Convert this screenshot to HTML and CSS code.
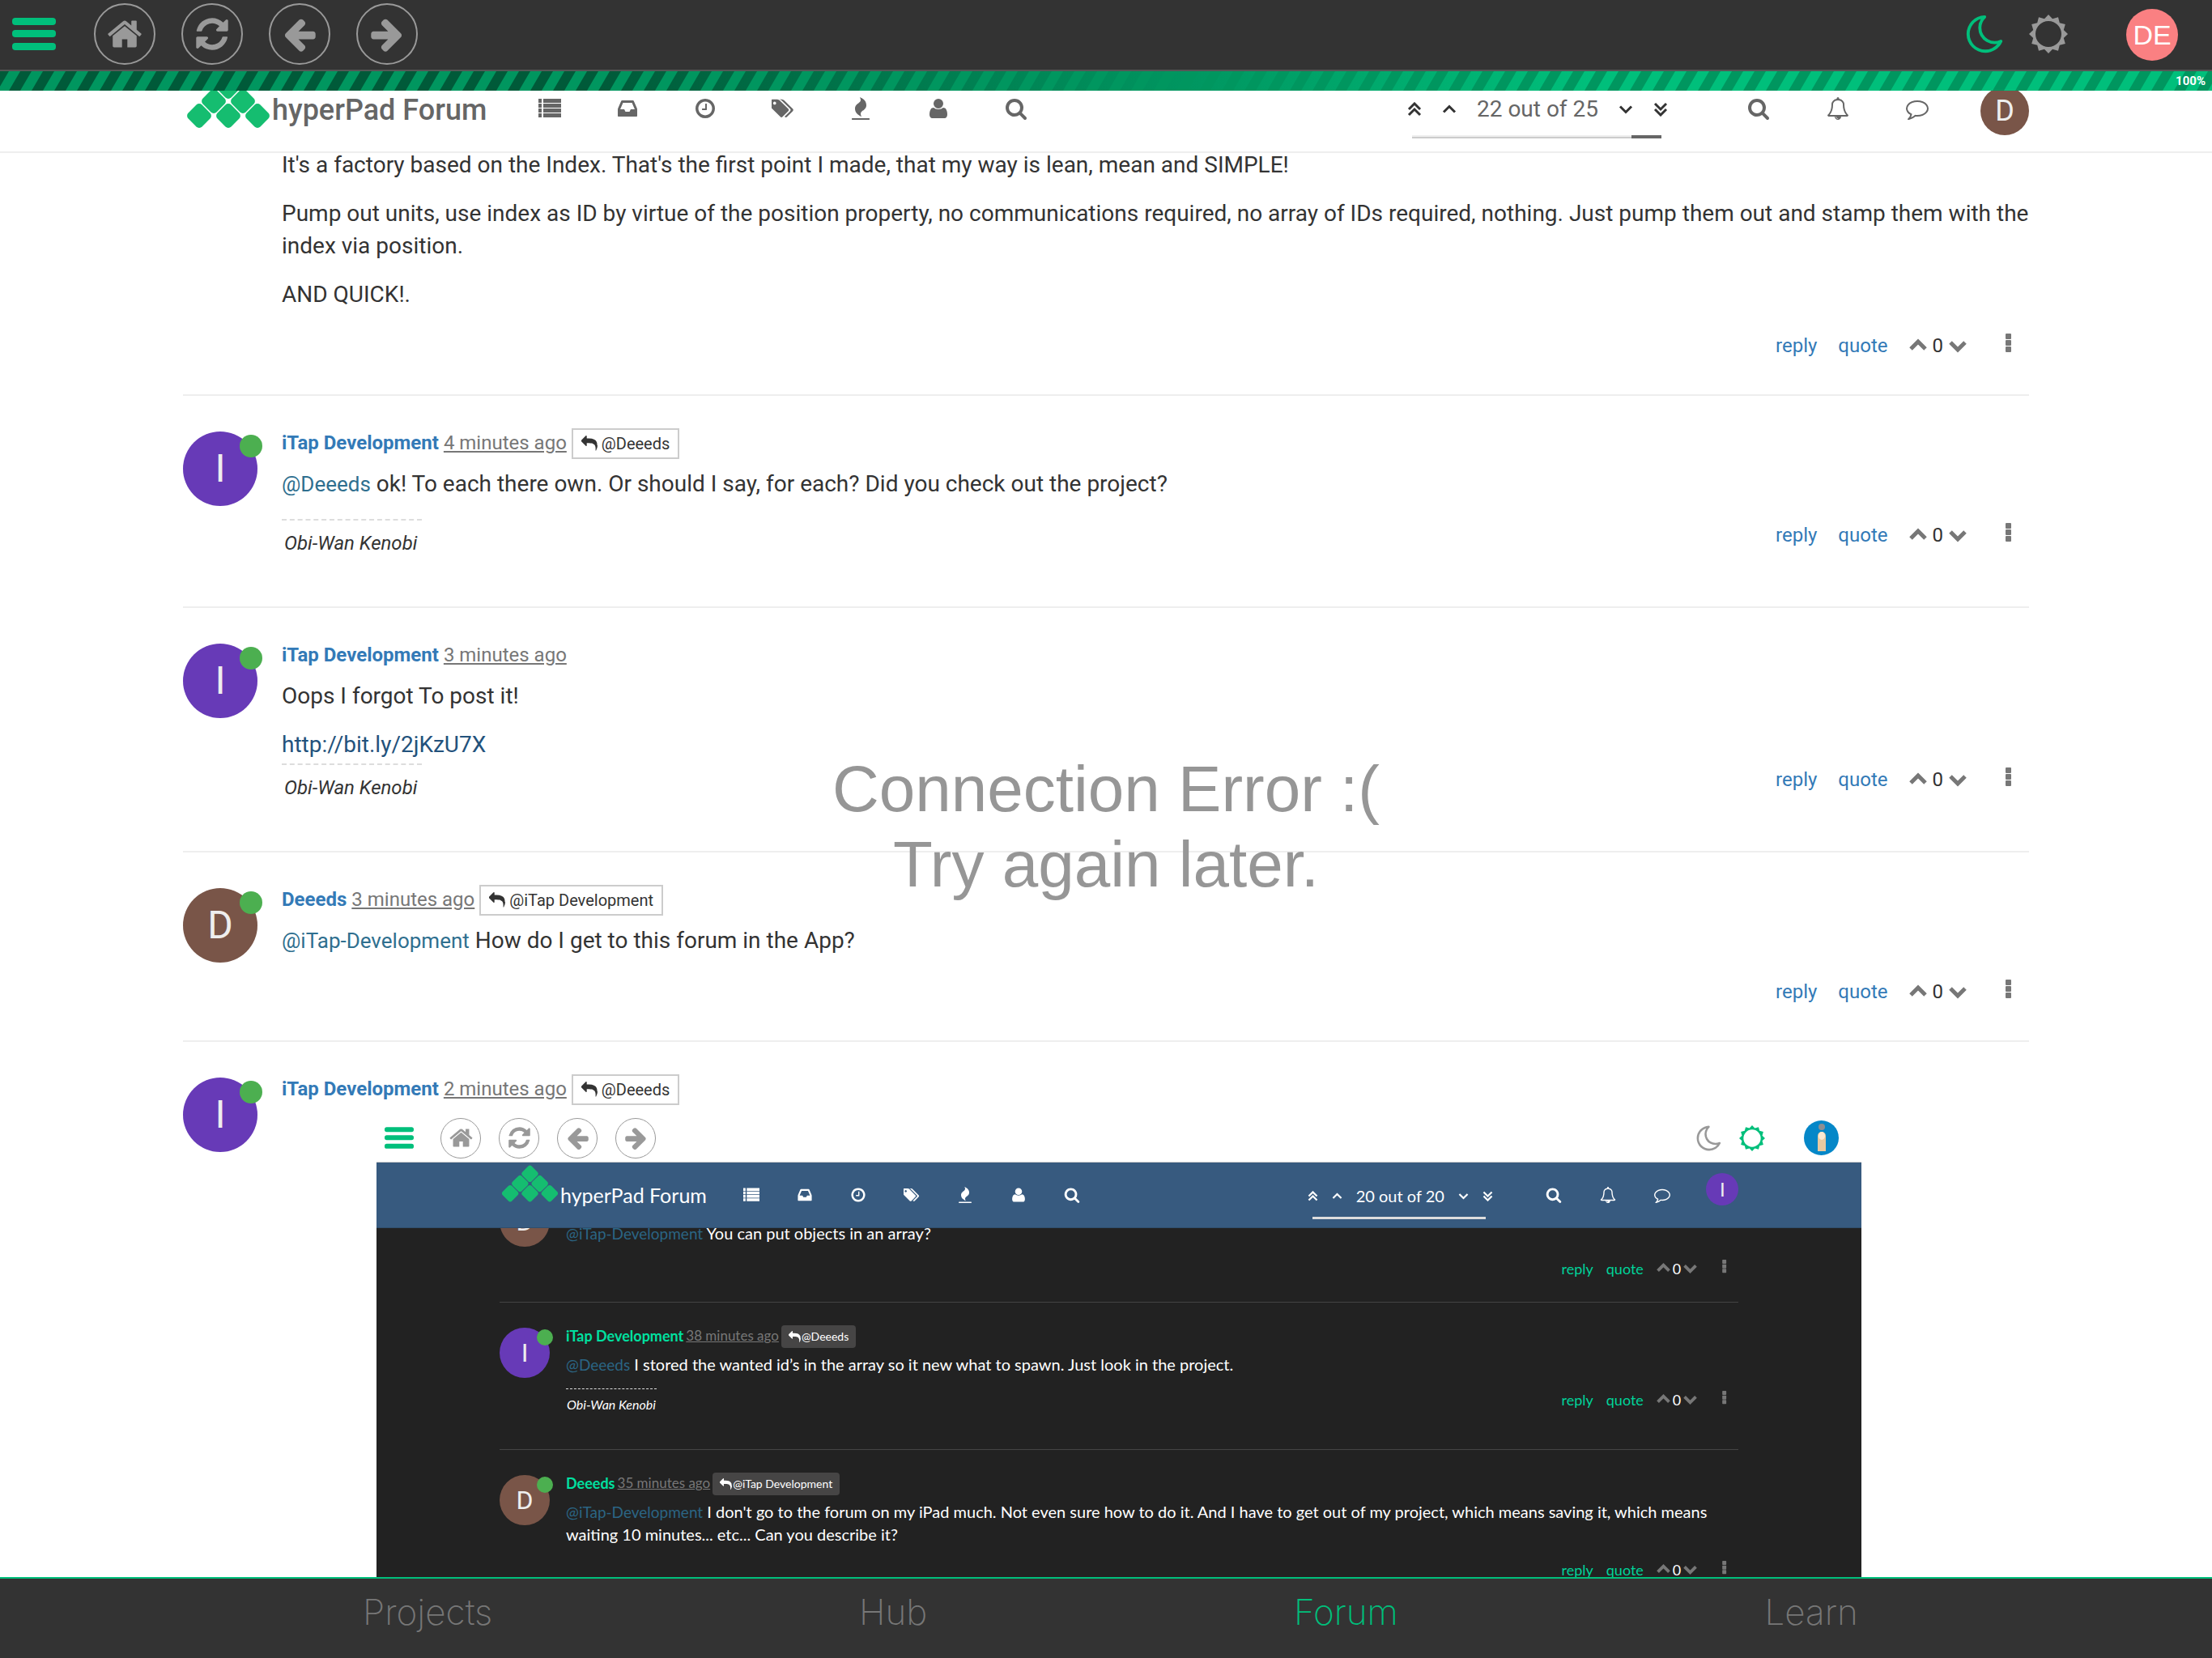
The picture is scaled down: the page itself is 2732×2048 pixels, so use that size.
FILE: index.html
```html
<!DOCTYPE html>
<html lang="en">
<head>
<meta charset="utf-8">
<meta name="viewport" content="width=device-width, initial-scale=1">
<title>hyperPad Forum</title>
<link rel="stylesheet" href="styles.css">
</head>
<body>
<svg class="sprite" aria-hidden="true">
  <symbol id="i-home" viewBox="0 0 1792 1792"><path d="M1472 992v480q0 26-19 45t-45 19h-384v-384h-256v384h-384q-26 0-45-19t-19-45v-480q0-1 .5-3t.5-3l575-474 575 474q1 2 1 6zm223-69l-62 74q-8 9-21 11h-3q-13 0-21-7l-692-577-692 577q-12 8-24 7-13-2-21-11l-62-74q-8-10-7-23.5t11-21.5l719-599q32-26 76-26t76 26l244 204v-195q0-14 9-23t23-9h192q14 0 23 9t9 23v408l219 182q10 8 11 21.5t-7 23.5z"/></symbol>
  <symbol id="i-refresh" viewBox="0 0 1792 1792"><path d="M1639 1056q0 5-1 7-64 268-268 434.5t-478 166.5q-146 0-282.5-55t-243.5-157l-129 129q-19 19-45 19t-45-19-19-45v-448q0-26 19-45t45-19h448q26 0 45 19t19 45-19 45l-137 137q71 66 161 102t187 36q134 0 250-65t186-179q11-17 53-117 8-23 30-23h192q13 0 22.5 9.5t9.5 22.5zm25-800v448q0 26-19 45t-45 19h-448q-26 0-45-19t-19-45 19-45l138-138q-148-137-349-137-134 0-250 65t-186 179q-11 17-53 117-8 23-30 23h-199q-13 0-22.5-9.5t-9.5-22.5v-7q65-268 270-434.5t480-166.5q146 0 284 55.5t245 156.5l130-129q19-19 45-19t45 19 19 45z"/></symbol>
  <symbol id="i-left" viewBox="0 0 1792 1792"><path d="M1664 896v128q0 53-32.5 90.5t-84.5 37.5h-704l293 294q38 36 38 90t-38 90l-75 76q-37 37-90 37-52 0-91-37l-651-652q-37-37-37-90 0-52 37-91l651-650q38-38 91-38 52 0 90 38l75 74q38 38 38 91t-38 91l-293 293h704q52 0 84.5 37.5t32.5 90.5z"/></symbol>
  <symbol id="i-right" viewBox="0 0 1792 1792"><path d="M1600 960q0 54-37 91l-651 651q-39 37-91 37-51 0-90-37l-75-75q-38-38-38-91t38-91l293-293h-704q-52 0-84.5-37.5t-32.5-90.5v-128q0-53 32.5-90.5t84.5-37.5h704l-293-294q-38-36-38-90t38-90l75-75q38-38 90-38 53 0 91 38l651 651q37 35 37 90z"/></symbol>
  <symbol id="i-moon" viewBox="0 0 1792 1792"><path d="M1390 1303q-54 9-110 9-182 0-337-90t-245-245-90-337q0-192 104-357-201 60-328.5 229t-127.5 384q0 130 51 248.5t136.5 204 204 136.5 248.5 51q144 0 273.5-61.5t220.5-171.5zm203-85q-94 203-283.5 324.5t-413.5 121.5q-156 0-298-61t-245-164-164-245-61-298q0-153 57.5-292.5t156-241.5 235.5-164.5 290-68.5q44-2 61 39 18 41-15 72-86 78-131.5 181.5t-45.5 218.5q0 148 73 273t198 198 273 73q118 0 228-51 41-18 72 13 14 14 17.5 34t-4.5 38z"/></symbol>
  <symbol id="i-sun" viewBox="0 0 48 48"><path fill-rule="evenodd" d="M24 0L29 5.2 36 3.2 37.8 10.2 44.8 12 42.8 19 48 24 42.8 29 44.8 36 37.8 37.8 36 44.8 29 42.8 24 48 19 42.8 12 44.8 10.2 37.8 3.2 36 5.2 29 0 24 5.2 19 3.2 12 10.2 10.2 12 3.2 19 5.2zM24 8a16 16 0 1 0 0 32a16 16 0 1 0 0-32z"/></symbol>
  <symbol id="i-list" viewBox="0 0 28 28"><path d="M0 2h4v5H0zM6 2h22v5H6zM0 8h4v5H0zM6 8h22v5H6zM0 14h4v5H0zM6 14h22v5H6zM0 20h4v5H0zM6 20h22v5H6z"/></symbol>
  <symbol id="i-inbox" viewBox="0 0 1792 1792"><path d="M1151 960h316q-1-3-2.5-8.5t-2.5-7.5l-212-496h-708l-212 496q-1 3-2.5 8.5t-2.5 7.5h316l95 192h320zm513 30v482q0 26-19 45t-45 19h-1408q-26 0-45-19t-19-45v-482q0-62 25-123l238-552q10-25 36.5-42t52.5-17h832q26 0 52.5 17t36.5 42l238 552q25 61 25 123z"/></symbol>
  <symbol id="i-clock" viewBox="0 0 1792 1792"><path d="M1024 544v448q0 14-9 23t-23 9h-320q-14 0-23-9t-9-23v-64q0-14 9-23t23-9h224v-352q0-14 9-23t23-9h64q14 0 23 9t9 23zm416 352q0-148-73-273t-198-198-273-73-273 73-198 198-73 273 73 273 198 198 273 73 273-73 198-198 73-273zm224 0q0 209-103 385.5t-279.5 279.5-385.5 103-385.5-103-279.5-279.5-103-385.5 103-385.5 279.5-279.5 385.5-103 385.5 103 279.5 279.5 103 385.5z"/></symbol>
  <symbol id="i-tags" viewBox="0 0 1920 1792"><path d="M384 448q0-53-37.5-90.5t-90.5-37.5-90.5 37.5-37.5 90.5 37.5 90.5 90.5 37.5 90.5-37.5 37.5-90.5zm1067 576q0 53-37 90l-491 492q-39 37-91 37-53 0-90-37l-715-716q-38-37-64.5-101t-26.5-117v-416q0-52 38-90t90-38h416q53 0 117 26.5t102 64.5l715 714q37 39 37 91zm384 0q0 53-37 90l-491 492q-39 37-91 37-36 0-59-14t-53-45l470-470q37-37 37-90 0-52-37-91l-715-714q-38-38-102-64.5t-117-26.5h224q53 0 117 26.5t102 64.5l715 714q37 39 37 91z"/></symbol>
  <symbol id="i-fire" viewBox="0 0 1792 1792"><path d="M1600 1696v64q0 13-9.500 22.500t-22.500 9.500h-1344q-13 0-22.500-9.500t-9.500-22.500v-64q0-13 9.500-22.500t22.500-9.500h1344q13 0 22.500 9.500t9.500 22.500zm-256-1056q0 78-24.500 144t-64 112.500-87.500 88-96 77.500-87.500 72-64 81.500-24.500 96.500q0 96 67 224l-4-1 1 1q-90-41-160-83t-138.500-100-113.500-122.500-72.500-150.500-27.500-184q0-78 24.500-144t64-112.500 87.500-88 96-77.500 87.500-72 64-81.500 24.500-96.500q0-94-66-224l3 1-1-1q90 41 160 83t138.500 100 113.500 122.500 72.500 150.500 27.500 184z"/></symbol>
  <symbol id="i-user" viewBox="0 0 1792 1792"><path d="M1600 1399q0 109-62.500 187t-150.500 78h-982q-88 0-150.500-78t-62.500-187q0-85 8.500-160.500t31.500-152 58.500-131 94-89 134.500-34.500q131 128 377 128t377-128q76 0 134.500 34.500t94 89 58.500 131 31.500 152 8.500 160.500zm-320-887q0 159-112.500 271.500t-271.500 112.500-271.500-112.500-112.500-271.500 112.500-271.500 271.500-112.500 271.500 112.500 112.500 271.500z"/></symbol>
  <symbol id="i-search" viewBox="0 0 1792 1792"><path d="M1216 832q0-185-131.500-316.500t-316.500-131.500-316.500 131.500-131.500 316.500 131.500 316.500 316.500 131.500 316.500-131.500 131.500-316.500zm512 832q0 52-38 90t-90 38q-54 0-90-38l-343-342q-179 124-399 124-143 0-273.500-55.500t-225-150-150-225-55.500-273.500 55.500-273.500 150-225 225-150 273.500-55.500 273.500 55.500 225 150 150 225 55.500 273.500q0 220-124 399l343 343q37 37 37 90z"/></symbol>
  <symbol id="i-bell" viewBox="0 0 1792 1792"><path d="M912 1696q0-16-16-16-59 0-101.500-42.500t-42.500-101.500q0-16-16-16t-16 16q0 73 51.500 124.500t124.500 51.500q16 0 16-16zm-666-288h1300q-266-300-266-832 0-51-24-105t-69-103-121.500-80.500-169.500-31.500-169.500 31.500-121.500 80.500-69 103-24 105q0 532-266 832zm1482 0q0 52-38 90t-90 38h-448q0 106-75 181t-181 75-181-75-75-181h-448q-52 0-90-38t-38-90q50-42 91-88t85-119.500 74.500-158.500 50-206 19.500-260q0-152 117-282.500t307-158.500q-8-19-8-39 0-40 28-68t68-28 68 28 28 68q0 20-8 39 190 28 307 158.500t117 282.500q0 139 19.500 260t50 206 74.500 158.500 85 119.500 91 88z"/></symbol>
  <symbol id="i-comment" viewBox="0 0 1792 1792"><path d="M896 384q-204 0-381.500 69.500t-282 187.500-104.500 255q0 112 71.500 213.500t201.500 175.500l87 50-27 96q-24 91-70 172 152-63 275-171l43-38 57 6q69 8 130 8 204 0 381.500-69.500t282-187.500 104.500-255-104.500-255-282-187.500-381.500-69.500zm896 512q0 174-120 321.500t-326 233-450 85.500q-70 0-145-8-198 175-460 242-49 14-114 22h-5q-15 0-27-10.500t-16-27.500v-1q-3-4-.5-12t2-10 4.500-9.500l6-9 7-8.500 8-9q7-8 31-34.500t34.500-38 31-39.500 32.500-51 27-59 26-76q-157-89-247.500-220t-90.500-281q0-174 120-321.500t326-233 450-85.500 450 85.500 326 233 120 321.500z"/></symbol>
  <symbol id="i-reply" viewBox="0 0 1792 1792"><path d="M1792 1120q0 166-127 451-3 7-10.500 24t-13.500 30-13 22q-12 17-28 17-15 0-23.500-10t-8.500-25q0-9 2.500-26.500t2.500-23.500q5-68 5-123 0-112-19.500-200.500t-54-154.500-88.500-113-115-79.500-140.500-46.500-159-21.500-176.500-5.500h-224v256q0 26-19 45t-45 19-45-19l-512-512q-19-19-19-45t19-45l512-512q19-19 45-19t45 19 19 45v256h224q713 0 875 403 53 134 53 333z"/></symbol>
  <symbol id="i-angle-up" viewBox="0 0 18 18"><path class="line" d="M2 12.500l7-7 7 7"/></symbol>
  <symbol id="i-angle-down" viewBox="0 0 18 18"><path class="line" d="M2 5.500l7 7 7-7"/></symbol>
  <symbol id="i-double-up" viewBox="0 0 18 18"><path class="line" d="M2 9l7-7 7 7M2 16l7-7 7 7"/></symbol>
  <symbol id="i-double-down" viewBox="0 0 18 18"><path class="line" d="M2 2l7 7 7-7M2 9l7 7 7-7"/></symbol>
  <symbol id="i-chev-up" viewBox="0 0 22 22"><path class="bold" d="M2 15l9-9 9 9"/></symbol>
  <symbol id="i-chev-down" viewBox="0 0 22 22"><path class="bold" d="M2 7l9 9 9-9"/></symbol>
  <symbol id="i-dots" viewBox="0 0 8 24"><rect x="0" y="0" width="7" height="7" rx="1"/><rect x="0" y="8" width="7" height="7" rx="1"/><rect x="0" y="16" width="7" height="7" rx="1"/></symbol>
  <symbol id="i-menu" viewBox="0 0 54 40"><rect width="54" height="9" rx="4"/><rect y="15" width="54" height="9" rx="4"/><rect y="31" width="54" height="9" rx="4"/></symbol>
  <symbol id="i-logo" viewBox="0 0 102 68">
    <g transform="translate(51 16) rotate(45)"><rect x="-12" y="-12" width="24" height="24" rx="5"/></g>
    <g transform="translate(33 34) rotate(45)"><rect x="-12" y="-12" width="24" height="24" rx="5"/></g>
    <g transform="translate(69 34) rotate(45)"><rect x="-12" y="-12" width="24" height="24" rx="5"/></g>
    <g transform="translate(15 52) rotate(45)"><rect x="-12" y="-12" width="24" height="24" rx="5"/></g>
    <g transform="translate(51 52) rotate(45)"><rect x="-12" y="-12" width="24" height="24" rx="5"/></g>
    <g transform="translate(87 52) rotate(45)"><rect x="-12" y="-12" width="24" height="24" rx="5"/></g>
  </symbol>
</svg>

<header class="app-bar">
  <button class="menu" aria-label="Menu"><svg><use href="#i-menu"/></svg></button>
  <div class="round-group">
    <button class="round" aria-label="Home"><svg><use href="#i-home"/></svg></button>
    <button class="round" aria-label="Refresh"><svg><use href="#i-refresh"/></svg></button>
    <button class="round" aria-label="Back"><svg><use href="#i-left"/></svg></button>
    <button class="round" aria-label="Forward"><svg><use href="#i-right"/></svg></button>
  </div>
  <button class="theme moon on" aria-label="Dark theme"><svg><use href="#i-moon"/></svg></button>
  <button class="theme sun" aria-label="Light theme"><svg><use href="#i-sun"/></svg></button>
  <button class="account">DE</button>
</header>

<div class="loading">
  <svg class="stripes" aria-hidden="true"><defs><pattern id="stripe" width="28" height="24" patternUnits="userSpaceOnUse"><path d="M11 0H25L11 24H-3zM39 0H53L39 24H25z"/></pattern></defs><rect width="100%" height="24" fill="url(#stripe)"/></svg>
  <span class="percent">100%</span>
</div>

<nav class="forum-nav">
  <a class="brand" href="#"><svg><use href="#i-logo"/></svg>hyperPad Forum</a>
  <a class="cell" href="#" aria-label="Categories"><svg><use href="#i-list"/></svg></a>
  <a class="cell" href="#" aria-label="Unread"><svg><use href="#i-inbox"/></svg></a>
  <a class="cell" href="#" aria-label="Recent"><svg><use href="#i-clock"/></svg></a>
  <a class="cell" href="#" aria-label="Tags"><svg><use href="#i-tags"/></svg></a>
  <a class="cell" href="#" aria-label="Popular"><svg><use href="#i-fire"/></svg></a>
  <a class="cell" href="#" aria-label="Users"><svg><use href="#i-user"/></svg></a>
  <a class="cell" href="#" aria-label="Search"><svg><use href="#i-search"/></svg></a>
  <div class="pager">
    <div class="pager-row">
      <button aria-label="First post"><svg><use href="#i-double-up"/></svg></button>
      <button aria-label="Previous post"><svg><use href="#i-angle-up"/></svg></button>
      <span>22 out of 25</span>
      <button aria-label="Next post"><svg><use href="#i-angle-down"/></svg></button>
      <button aria-label="Last post"><svg><use href="#i-double-down"/></svg></button>
    </div>
    <div class="track"><div class="thumb" style="width:12%"></div></div>
  </div>
  <a class="tool" href="#" aria-label="Search topic"><svg><use href="#i-search"/></svg></a>
  <a class="tool" href="#" aria-label="Notifications"><svg><use href="#i-bell"/></svg></a>
  <a class="tool" href="#" aria-label="Chats"><svg><use href="#i-comment"/></svg></a>
  <a class="nav-avatar brown" href="#">D</a>
</nav>

<main class="view">
  <div class="topic">
    <article class="post first">
      <div class="col">
        <div class="text">
          <p>It's a factory based on the Index. That's the first point I made, that my way is lean, mean and SIMPLE!</p>
          <p>Pump out units, use index as ID by virtue of the position property, no communications required, no array of IDs required, nothing. Just pump them out and stamp them with the index via position.</p>
          <p>AND QUICK!.</p>
        </div>
        <footer class="post-foot">
          <div class="actions"><a href="#">reply</a><a href="#">quote</a><span class="vote"><button aria-label="Upvote"><svg><use href="#i-chev-up"/></svg></button><span>0</span><button aria-label="Downvote"><svg><use href="#i-chev-down"/></svg></button></span><button class="more" aria-label="More"><svg><use href="#i-dots"/></svg></button></div>
        </footer>
      </div>
    </article>

    <article class="post">
      <div class="avatar purple">I<i class="online"></i></div>
      <div class="col">
        <header class="post-head"><a class="name" href="#">iTap Development</a><a class="time" href="#">4 minutes ago</a><a class="to" href="#"><svg><use href="#i-reply"/></svg>@Deeeds</a></header>
        <div class="text"><p><a class="mention" href="#">@Deeeds</a> ok! To each there own. Or should I say, for each? Did you check out the project?</p></div>
        <footer class="post-foot">
          <div class="signature">Obi-Wan Kenobi</div>
          <div class="actions"><a href="#">reply</a><a href="#">quote</a><span class="vote"><button aria-label="Upvote"><svg><use href="#i-chev-up"/></svg></button><span>0</span><button aria-label="Downvote"><svg><use href="#i-chev-down"/></svg></button></span><button class="more" aria-label="More"><svg><use href="#i-dots"/></svg></button></div>
        </footer>
      </div>
    </article>

    <article class="post">
      <div class="avatar purple">I<i class="online"></i></div>
      <div class="col">
        <header class="post-head"><a class="name" href="#">iTap Development</a><a class="time" href="#">3 minutes ago</a></header>
        <div class="text tight"><p>Oops I forgot To post it!</p><p><a class="url" href="#">http://bit.ly/2jKzU7X</a></p></div>
        <footer class="post-foot">
          <div class="signature">Obi-Wan Kenobi</div>
          <div class="actions"><a href="#">reply</a><a href="#">quote</a><span class="vote"><button aria-label="Upvote"><svg><use href="#i-chev-up"/></svg></button><span>0</span><button aria-label="Downvote"><svg><use href="#i-chev-down"/></svg></button></span><button class="more" aria-label="More"><svg><use href="#i-dots"/></svg></button></div>
        </footer>
      </div>
    </article>

    <article class="post">
      <div class="avatar brown">D<i class="online"></i></div>
      <div class="col">
        <header class="post-head"><a class="name" href="#">Deeeds</a><a class="time" href="#">3 minutes ago</a><a class="to" href="#"><svg><use href="#i-reply"/></svg>@iTap Development</a></header>
        <div class="text"><p><a class="mention" href="#">@iTap-Development</a> How do I get to this forum in the App?</p></div>
        <footer class="post-foot">
          <div class="actions"><a href="#">reply</a><a href="#">quote</a><span class="vote"><button aria-label="Upvote"><svg><use href="#i-chev-up"/></svg></button><span>0</span><button aria-label="Downvote"><svg><use href="#i-chev-down"/></svg></button></span><button class="more" aria-label="More"><svg><use href="#i-dots"/></svg></button></div>
        </footer>
      </div>
    </article>

    <article class="post">
      <div class="avatar purple">I<i class="online"></i></div>
      <div class="col">
        <header class="post-head"><a class="name" href="#">iTap Development</a><a class="time" href="#">2 minutes ago</a><a class="to" href="#"><svg><use href="#i-reply"/></svg>@Deeeds</a></header>

        <div class="shot">
          <div class="app-bar">
            <button class="menu" aria-label="Menu"><svg><use href="#i-menu"/></svg></button>
            <div class="round-group">
              <button class="round" aria-label="Home"><svg><use href="#i-home"/></svg></button>
              <button class="round" aria-label="Refresh"><svg><use href="#i-refresh"/></svg></button>
              <button class="round" aria-label="Back"><svg><use href="#i-left"/></svg></button>
              <button class="round" aria-label="Forward"><svg><use href="#i-right"/></svg></button>
            </div>
            <button class="theme moon" aria-label="Dark theme"><svg><use href="#i-moon"/></svg></button>
            <button class="theme sun on" aria-label="Light theme"><svg><use href="#i-sun"/></svg></button>
            <svg class="candle" viewBox="0 0 43 43" aria-label="iTap Development"><circle cx="21.500" cy="21.500" r="21.500" fill="#0587c8"/><path d="M17 38V19a5 5 0 0 1 10 0v19z" fill="#e8c9a0"/><ellipse cx="22" cy="19" rx="4" ry="5" fill="#fbe9d2"/><circle cx="22" cy="8" r="4" fill="#8b8f93"/></svg>
          </div>

          <div class="forum-nav">
            <a class="brand" href="#"><svg><use href="#i-logo"/></svg>hyperPad Forum</a>
            <a class="cell" href="#" aria-label="Categories"><svg><use href="#i-list"/></svg></a>
            <a class="cell" href="#" aria-label="Unread"><svg><use href="#i-inbox"/></svg></a>
            <a class="cell" href="#" aria-label="Recent"><svg><use href="#i-clock"/></svg></a>
            <a class="cell" href="#" aria-label="Tags"><svg><use href="#i-tags"/></svg></a>
            <a class="cell" href="#" aria-label="Popular"><svg><use href="#i-fire"/></svg></a>
            <a class="cell" href="#" aria-label="Users"><svg><use href="#i-user"/></svg></a>
            <a class="cell" href="#" aria-label="Search"><svg><use href="#i-search"/></svg></a>
            <div class="pager">
              <div class="pager-row">
                <button aria-label="First post"><svg><use href="#i-double-up"/></svg></button>
                <button aria-label="Previous post"><svg><use href="#i-angle-up"/></svg></button>
                <span>20 out of 20</span>
                <button aria-label="Next post"><svg><use href="#i-angle-down"/></svg></button>
                <button aria-label="Last post"><svg><use href="#i-double-down"/></svg></button>
              </div>
              <div class="track"></div>
            </div>
            <a class="tool" href="#" aria-label="Search topic"><svg><use href="#i-search"/></svg></a>
            <a class="tool" href="#" aria-label="Notifications"><svg><use href="#i-bell"/></svg></a>
            <a class="tool" href="#" aria-label="Chats"><svg><use href="#i-comment"/></svg></a>
            <a class="nav-avatar purple" href="#">I</a>
          </div>

          <div class="shot-topic">
            <div class="post">
              <div class="avatar brown">D</div>
              <div class="col">
                <div class="post-head"></div>
                <div class="text"><p><a class="mention" href="#">@iTap-Development</a> You can put objects in an array?</p></div>
                <div class="post-foot">
                  <div class="actions"><a href="#">reply</a><a href="#">quote</a><span class="vote"><button aria-label="Upvote"><svg><use href="#i-chev-up"/></svg></button><span>0</span><button aria-label="Downvote"><svg><use href="#i-chev-down"/></svg></button></span><button class="more" aria-label="More"><svg><use href="#i-dots"/></svg></button></div>
                </div>
              </div>
            </div>
            <div class="post">
              <div class="avatar purple">I<i class="online"></i></div>
              <div class="col">
                <div class="post-head"><a class="name" href="#">iTap Development</a><a class="time" href="#">38 minutes ago</a><a class="to" href="#"><svg><use href="#i-reply"/></svg>@Deeeds</a></div>
                <div class="text"><p><a class="mention" href="#">@Deeeds</a> I stored the wanted id’s in the array so it new what to spawn. Just look in the project.</p></div>
                <div class="post-foot">
                  <div class="signature">Obi-Wan Kenobi</div>
                  <div class="actions"><a href="#">reply</a><a href="#">quote</a><span class="vote"><button aria-label="Upvote"><svg><use href="#i-chev-up"/></svg></button><span>0</span><button aria-label="Downvote"><svg><use href="#i-chev-down"/></svg></button></span><button class="more" aria-label="More"><svg><use href="#i-dots"/></svg></button></div>
                </div>
              </div>
            </div>
            <div class="post">
              <div class="avatar brown">D<i class="online"></i></div>
              <div class="col">
                <div class="post-head"><a class="name" href="#">Deeeds</a><a class="time" href="#">35 minutes ago</a><a class="to" href="#"><svg><use href="#i-reply"/></svg>@iTap Development</a></div>
                <div class="text"><p><a class="mention" href="#">@iTap-Development</a> I don't go to the forum on my iPad much. Not even sure how to do it. And I have to get out of my project, which means saving it, which means waiting 10 minutes... etc... Can you describe it?</p></div>
                <div class="post-foot">
                  <div class="actions"><a href="#">reply</a><a href="#">quote</a><span class="vote"><button aria-label="Upvote"><svg><use href="#i-chev-up"/></svg></button><span>0</span><button aria-label="Downvote"><svg><use href="#i-chev-down"/></svg></button></span><button class="more" aria-label="More"><svg><use href="#i-dots"/></svg></button></div>
                </div>
              </div>
            </div>
          </div>
        </div>
      </div>
    </article>
  </div>
</main>

<nav class="tabs">
  <a href="#">Projects</a>
  <a href="#">Hub</a>
  <a class="current" href="#">Forum</a>
  <a href="#">Learn</a>
</nav>

<div class="error" role="alert">Connection Error :(<br>Try again later.</div>
</body>
</html>
```

FILE: styles.css
```css
* { box-sizing: border-box; }

body {
  margin: 0;
  height: 100vh;
  display: flex;
  flex-direction: column;
  overflow: hidden;
  background: #fff;
  color: #333;
  font: 28px/40px Roboto, "Liberation Sans", sans-serif;
}

a { color: inherit; text-decoration: none; }
p { margin: 0; }
button {
  display: flex;
  align-items: center;
  justify-content: center;
  margin: 0;
  padding: 0;
  border: 0;
  background: none;
  color: inherit;
  font: inherit;
}
svg { display: block; flex: none; fill: currentColor; }
.sprite { position: absolute; width: 0; height: 0; }
.line { fill: none; stroke: currentColor; stroke-width: 3; }
.bold { fill: none; stroke: currentColor; stroke-width: 5; }
.purple { background: #673ab7; }
.brown { background: #795548; }

/* App toolbar */
.app-bar {
  position: relative;
  z-index: 3;
  flex: none;
  display: flex;
  align-items: center;
  height: 88px;
  padding: 0 42px 2px 15px;
  border-bottom: 2px solid #555;
  background: #333;
  color: #999;
}
.menu { color: #00bf7b; }
.menu svg { width: 54px; height: 40px; }
.round-group { display: flex; gap: 32px; margin: 0 auto 0 47px; }
.round {
  width: 76px;
  height: 76px;
  border: 2px solid #999;
  border-radius: 50%;
}
.round svg { width: 46px; height: 46px; }
.theme.on { color: #00bf7b; }
.moon { margin-right: 27px; }
.moon svg { width: 54px; height: 54px; }
.sun { margin-right: 72px; }
.sun svg { width: 48px; height: 48px; }
.account {
  width: 64px;
  height: 64px;
  margin-top: 2px;
  border-radius: 50%;
  background: #fa8082;
  color: #fff;
  font: 34px "Liberation Sans", sans-serif;
}

/* Loading bar */
.loading {
  position: relative;
  z-index: 3;
  flex: none;
  height: 24px;
  background: linear-gradient(90deg, #005a39 27%, #00bf7b 72%);
}
.stripes { width: 100%; height: 24px; fill: #00965f; }
.percent {
  position: absolute;
  top: 0;
  right: 8px;
  color: #fff;
  font-size: 15px;
  font-weight: 700;
  line-height: 24px;
}

/* Forum navigation, its top tucked under the loading bar */
.forum-nav {
  position: relative;
  z-index: 2;
  flex: none;
  display: flex;
  align-items: center;
  height: 109px;
  margin-top: -32px;
  padding: 0 calc(50% - 1140px);
  border-bottom: 2px solid #eee;
  background: #fff;
  color: #666;
}
.brand {
  flex: 0 0 405px;
  display: flex;
  align-items: center;
  gap: 3px;
  padding: 4px 0 0 5px;
  font-size: 36px;
  font-weight: 500;
  white-space: nowrap;
}
.brand svg { width: 102px; height: 68px; margin-bottom: 22px; color: #15bd70; }
.cell { flex: 0 0 96px; display: flex; justify-content: center; }
.tool { flex: 0 0 98px; display: flex; justify-content: center; }
.cell svg, .tool svg { width: 28px; height: 28px; }
.pager {
  align-self: stretch;
  flex: 0 0 308px;
  margin: 0 71px 0 auto;
  padding-top: 23px;
}
.pager-row {
  display: flex;
  align-items: center;
  justify-content: center;
  gap: 25px;
  height: 64px;
  margin: 0 -14px 0 -12px;
  white-space: nowrap;
}
.pager-row button { color: #333; }
.pager-row svg { width: 18px; height: 18px; }
.track { height: 4px; border-top: 2px solid #eee; background: #ccc; }
.thumb { height: 4px; margin: -2px 0 0 auto; background: #666; }
.nav-avatar {
  flex: none;
  width: 60px;
  height: 60px;
  margin: 6px 0 0 29px;
  border-radius: 50%;
  color: #eee;
  font-size: 36px;
  line-height: 60px;
  text-align: center;
}

/* Posts */
.view { flex: 1; min-height: 0; overflow: hidden; }
.topic { max-width: 2280px; margin: 0 auto; }
.post {
  display: flex;
  gap: 30px;
  padding: 40px 0 42px;
  border-bottom: 2px solid #eee;
}
.first { margin-top: -5px; padding-top: 0; padding-left: 122px; }
.avatar {
  position: relative;
  flex: none;
  width: 92px;
  height: 92px;
  margin-top: 4px;
  border-radius: 50%;
  color: #eee;
  font-size: 48px;
  line-height: 92px;
  text-align: center;
}
.online {
  position: absolute;
  top: 4px;
  right: -6px;
  width: 28px;
  height: 28px;
  border-radius: 50%;
  background: #4caf50;
}
.col { flex: 1; min-width: 0; }
.post-head {
  display: flex;
  align-items: center;
  gap: 6px;
  height: 38px;
  margin-bottom: 11px;
  font-size: 24px;
  line-height: 36px;
}
.name, .time { padding-bottom: 2px; }
.name { color: #337ab7; font-weight: 700; }
.time { color: #777; text-decoration: underline; }
.to {
  display: flex;
  align-items: center;
  gap: 5px;
  height: 38px;
  padding: 0 10px;
  border: 2px solid #ccc;
  font-size: 20px;
}
.to svg { width: 20px; height: 20px; }
.text p + p { margin-top: 20px; }
.mention { color: #2f6f8f; font-size: 26px; line-height: 1; }
.url { color: #23527c; }
.post-foot { display: flex; align-items: flex-start; margin-top: 23px; }
.tight + .post-foot { margin-top: 3px; }
.signature {
  height: 66px;
  padding: 11px 6px 0 3px;
  border-top: 2px dashed #ddd;
  font-size: 24px;
  font-style: italic;
  line-height: 34px;
}
.actions {
  display: flex;
  align-items: center;
  gap: 26px;
  height: 38px;
  margin-left: auto;
  padding: 2px 21px 0 0;
  color: #337ab7;
  font-size: 24px;
}
.vote { display: flex; align-items: center; gap: 7px; color: #333; }
.vote button, .more { color: #777; }
.vote svg { width: 22px; height: 22px; }
.more { margin: 0 0 6px 22px; }
.more svg { width: 8px; height: 24px; }

/* Screenshot attached to the last post */
.shot {
  width: 85%;
  margin: 10px 0 0 117px;
  background: #222;
  color: #fff;
  font: 20px/28px Lato, "Liberation Sans", sans-serif;
}
.shot .app-bar {
  height: 60px;
  padding: 0 28px 0 10px;
  border-bottom: 1px solid #ccc;
  background: #fff;
}
.shot .menu svg { width: 36px; height: 27px; }
.shot .round-group { gap: 22px; margin-left: 33px; }
.shot .round { width: 50px; height: 50px; border-width: 1px; }
.shot .round svg { width: 31px; height: 31px; }
.shot .moon { margin-right: 19px; }
.shot .moon svg { width: 36px; height: 36px; }
.shot .sun { margin-right: 48px; }
.shot .sun svg { width: 32px; height: 32px; }
.candle { width: 43px; height: 43px; }
.shot .forum-nav {
  height: 81px;
  margin-top: 0;
  padding: 0 152px;
  border-bottom: 1px solid #2f4d6c;
  background: #375a7f;
  color: #fff;
}
.shot .brand { flex-basis: 278px; gap: 3px; padding: 0 0 0 3px; font-size: 25px; font-weight: 400; }
.shot .brand svg { width: 69px; height: 46px; margin-bottom: 28px; }
.shot .cell { flex-basis: 66px; }
.shot .tool { flex-basis: 67px; }
.shot .cell svg, .shot .tool svg { width: 20px; height: 20px; }
.shot .pager { flex-basis: 214px; margin-right: 50px; padding-top: 15px; }
.shot .pager-row { gap: 17px; height: 52px; }
.shot .pager-row button { color: #fff; }
.shot .pager-row svg { width: 13px; height: 13px; }
.shot .track { height: 3px; border: 0; background: #ddd; }
.shot .nav-avatar {
  width: 40px;
  height: 40px;
  margin: 0 0 14px 21px;
  font-size: 24px;
  line-height: 40px;
}
.shot-topic { margin-top: -70px; padding: 0 152px; }
.shot .post { gap: 20px; padding: 28px 0; border-bottom: 1px solid #444; }
.shot .avatar {
  width: 62px;
  height: 62px;
  margin-top: 3px;
  font: 32px/62px Roboto, sans-serif;
}
.shot .online { top: 2px; right: -4px; width: 20px; height: 20px; }
.shot .post-head { gap: 3px; height: 28px; margin-bottom: 6px; font-size: 17px; line-height: 26px; }
.shot .name { color: #00e0a0; font-size: 18px; }
.shot .time { color: #777; }
.shot .to {
  gap: 1px;
  height: 28px;
  padding: 0 9px;
  border: 0;
  border-radius: 4px;
  background: #464545;
  font-size: 14px;
}
.shot .to svg { width: 15px; height: 15px; }
.shot .text { padding-right: 24px; }
.shot .mention { color: #2b6584; font-size: 19px; }
.shot .post-foot { margin-top: 16px; }
.shot .signature { height: 47px; padding: 6px 1px 0 1px; border-top: 1px dashed #ddd; font-size: 16px; line-height: 26px; }
.shot .actions { gap: 16px; height: 27px; padding: 0 14px 0 0; color: #00d49a; font-size: 18px; }
.shot .vote { gap: 3px; color: #fff; }
.shot .vote svg { width: 17px; height: 17px; }
.shot .more { margin: 0 0 4px 15px; }
.shot .more svg { width: 6px; height: 17px; }

/* Bottom tabs */
.tabs {
  position: relative;
  z-index: 3;
  flex: none;
  display: flex;
  justify-content: space-between;
  height: 100px;
  padding: 10px 16% 0 16.4%;
  border-top: 2px solid #00bf7b;
  background: #333;
  color: #777;
  font: 200 44px/62px Inter, Roboto, sans-serif;
}
.current { color: #00bf7b; }

/* Message over the page */
.error {
  position: fixed;
  inset: 0;
  z-index: 4;
  display: flex;
  align-items: center;
  justify-content: center;
  padding-bottom: 6px;
  color: #969696;
  font: 80px/93px "Liberation Sans", sans-serif;
  text-align: center;
  pointer-events: none;
}
```
